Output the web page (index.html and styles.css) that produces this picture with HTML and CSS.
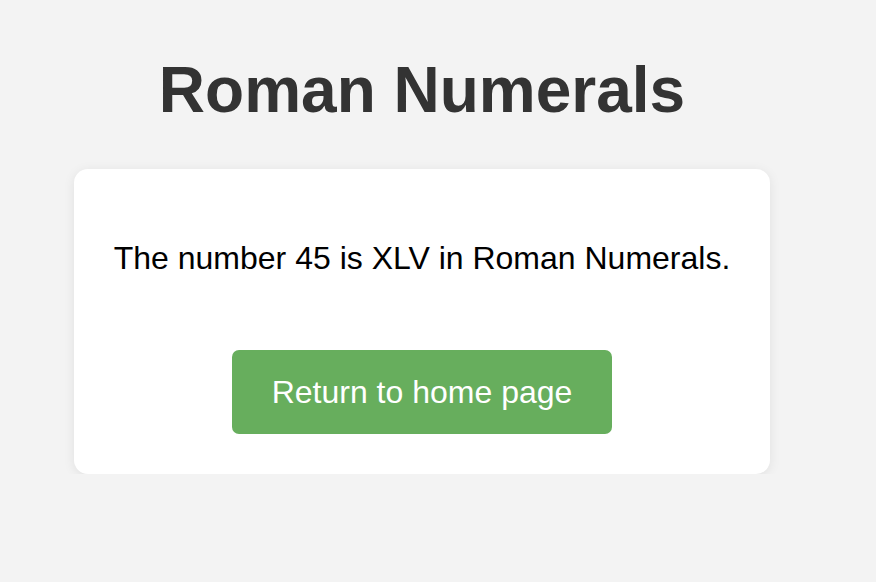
FILE: index.html
```html
<!DOCTYPE html>
<html lang="en">
<head>
<meta charset="utf-8">
<title>Roman Numerals</title>
<link rel="stylesheet" href="styles.css">
</head>
<body>
<main class="page">
  <h1 class="title">Roman Numerals</h1>
  <section class="card">
    <p class="result">The number 45 is XLV in Roman Numerals.</p>
    <a class="btn" href="#">Return to home page</a>
  </section>
</main>
</body>
</html>
```

FILE: styles.css
```css
html, body {
  margin: 0;
  padding: 0;
  background: #f3f3f3;
}
body {
  font-family: "Liberation Sans", Arial, Helvetica, sans-serif;
  color: #000;
}
.page {
  width: 696px;
  margin-left: 74px;
  padding-top: 53px;
  display: flex;
  flex-direction: column;
  align-items: center;
}
.title {
  margin: 0 0 42px;
  font-size: 64px;
  font-weight: 700;
  color: #333333;
  line-height: normal;
}
.card {
  box-sizing: border-box;
  width: 696px;
  background: #ffffff;
  border-radius: 14px;
  box-shadow: 0 2px 12px rgba(0, 0, 0, 0.08);
  padding: 40px 20px;
  display: flex;
  flex-direction: column;
  align-items: center;
}
.result {
  margin: 31px 0 73px;
  font-size: 32px;
  line-height: normal;
  text-align: center;
  white-space: nowrap;
}
.btn {
  display: block;
  width: 380px;
  height: 84px;
  box-sizing: border-box;
  background: #67ae5d;
  color: #ffffff;
  text-decoration: none;
  border-radius: 7px;
  font-size: 32px;
  line-height: 84px;
  text-align: center;
}
```
